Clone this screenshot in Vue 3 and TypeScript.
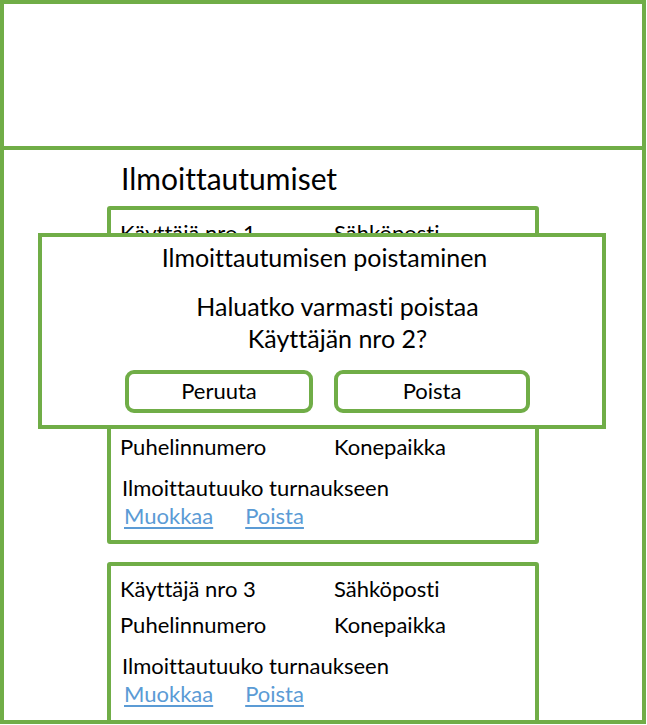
<script setup lang="ts">
import { ref } from 'vue'

interface Registration {
  id: number
  name: string
}

const registrations: Registration[] = [
  { id: 1, name: 'Käyttäjä nro 1' },
  { id: 2, name: 'Käyttäjä nro 2' },
  { id: 3, name: 'Käyttäjä nro 3' },
]

const dialogOpen = ref(true)

function openDialog(): void {
  dialogOpen.value = true
}

function closeDialog(): void {
  dialogOpen.value = false
}
</script>

<template>
  <div class="page">
    <header class="banner"></header>
    <main class="content">
      <h1 class="heading">Ilmoittautumiset</h1>
      <section class="list">
        <article v-for="item in registrations" :key="item.id" class="card">
          <div class="fields">
            <span>{{ item.name }}</span>
            <span>Sähköposti</span>
            <span>Puhelinnumero</span>
            <span>Konepaikka</span>
          </div>
          <p class="question">Ilmoittautuuko turnaukseen</p>
          <nav class="links">
            <a href="#">Muokkaa</a>
            <a href="#" @click.prevent="openDialog">Poista</a>
          </nav>
        </article>
      </section>

      <dialog class="dialog" :open="dialogOpen" aria-labelledby="dialog-title">
        <h2 id="dialog-title" class="dialog-title">Ilmoittautumisen poistaminen</h2>
        <p class="message">Haluatko varmasti poistaa<br />Käyttäjän nro 2?</p>
        <div class="actions">
          <button type="button" @click="closeDialog">Peruuta</button>
          <button type="button" @click="closeDialog">Poista</button>
        </div>
      </dialog>
    </main>
  </div>
</template>

<style>
body {
  background: #fff;
  padding: 0 1px 1px 0;
}
</style>

<style scoped>
.page {
  --green: #70ad47;
  box-sizing: border-box;
  display: flex;
  flex-direction: column;
  min-height: calc(100vh - 1px);
  border: 4px solid var(--green);
  font-family: Lato, Carlito, Calibri, sans-serif;
  font-size: 22px;
  font-variant-ligatures: none;
  line-height: 28px;
  color: #000;
}

.banner {
  height: 142px;
  border-bottom: 4px solid var(--green);
}

.content {
  position: relative;
  flex: 1;
  display: flex;
  flex-direction: column;
  box-sizing: border-box;
  width: 100%;
  max-width: 570px;
  margin: 0 auto;
  padding: 8px 69px 0;
}

.heading {
  margin: 0 0 8px;
  padding-left: 14px;
  font-size: 30px;
  font-weight: 400;
  line-height: 40px;
}

.list {
  flex: 1;
  display: flex;
  flex-direction: column;
  gap: 18px;
}

.card {
  box-sizing: border-box;
  min-height: 160px;
  padding: 9px 8px 5px 9px;
  border: 4px solid var(--green);
  border-radius: 3px;
}

/* The last card runs into the bottom edge of the frame. */
.card:last-child {
  flex: 1;
  margin-bottom: -4px;
}

.fields {
  display: grid;
  grid-template-columns: 214px 1fr;
  row-gap: 8px;
}

.question {
  margin: 13px 0 0;
  padding-left: 2px;
}

.links {
  display: flex;
  gap: 32px;
  padding-left: 4px;
}

.links a {
  color: #5b9bd5;
  text-decoration-thickness: 2px;
  text-underline-offset: 3px;
}

.dialog {
  position: absolute;
  top: 83px;
  left: 0;
  right: 2px;
  display: none;
  box-sizing: border-box;
  width: auto;
  max-width: none;
  margin: 0;
  padding: 4px 72px 12px 83px;
  border: 4px solid var(--green);
  background: #fff;
  color: #000;
}

.dialog[open] {
  display: block;
}

.dialog-title {
  margin: 0 6px 17px 0;
  font-size: 25px;
  font-weight: 400;
  line-height: 32px;
  text-align: center;
}

.message {
  margin: 0 0 16px 20px;
  font-size: 25px;
  line-height: 32px;
  text-align: center;
}

.actions {
  display: grid;
  grid-template-columns: 188fr 196fr;
  gap: 21px;
}

.actions button {
  height: 43px;
  padding: 0 0 2px;
  border: 4px solid var(--green);
  border-radius: 9px;
  background: #fff;
  font: inherit;
  color: inherit;
}
</style>
